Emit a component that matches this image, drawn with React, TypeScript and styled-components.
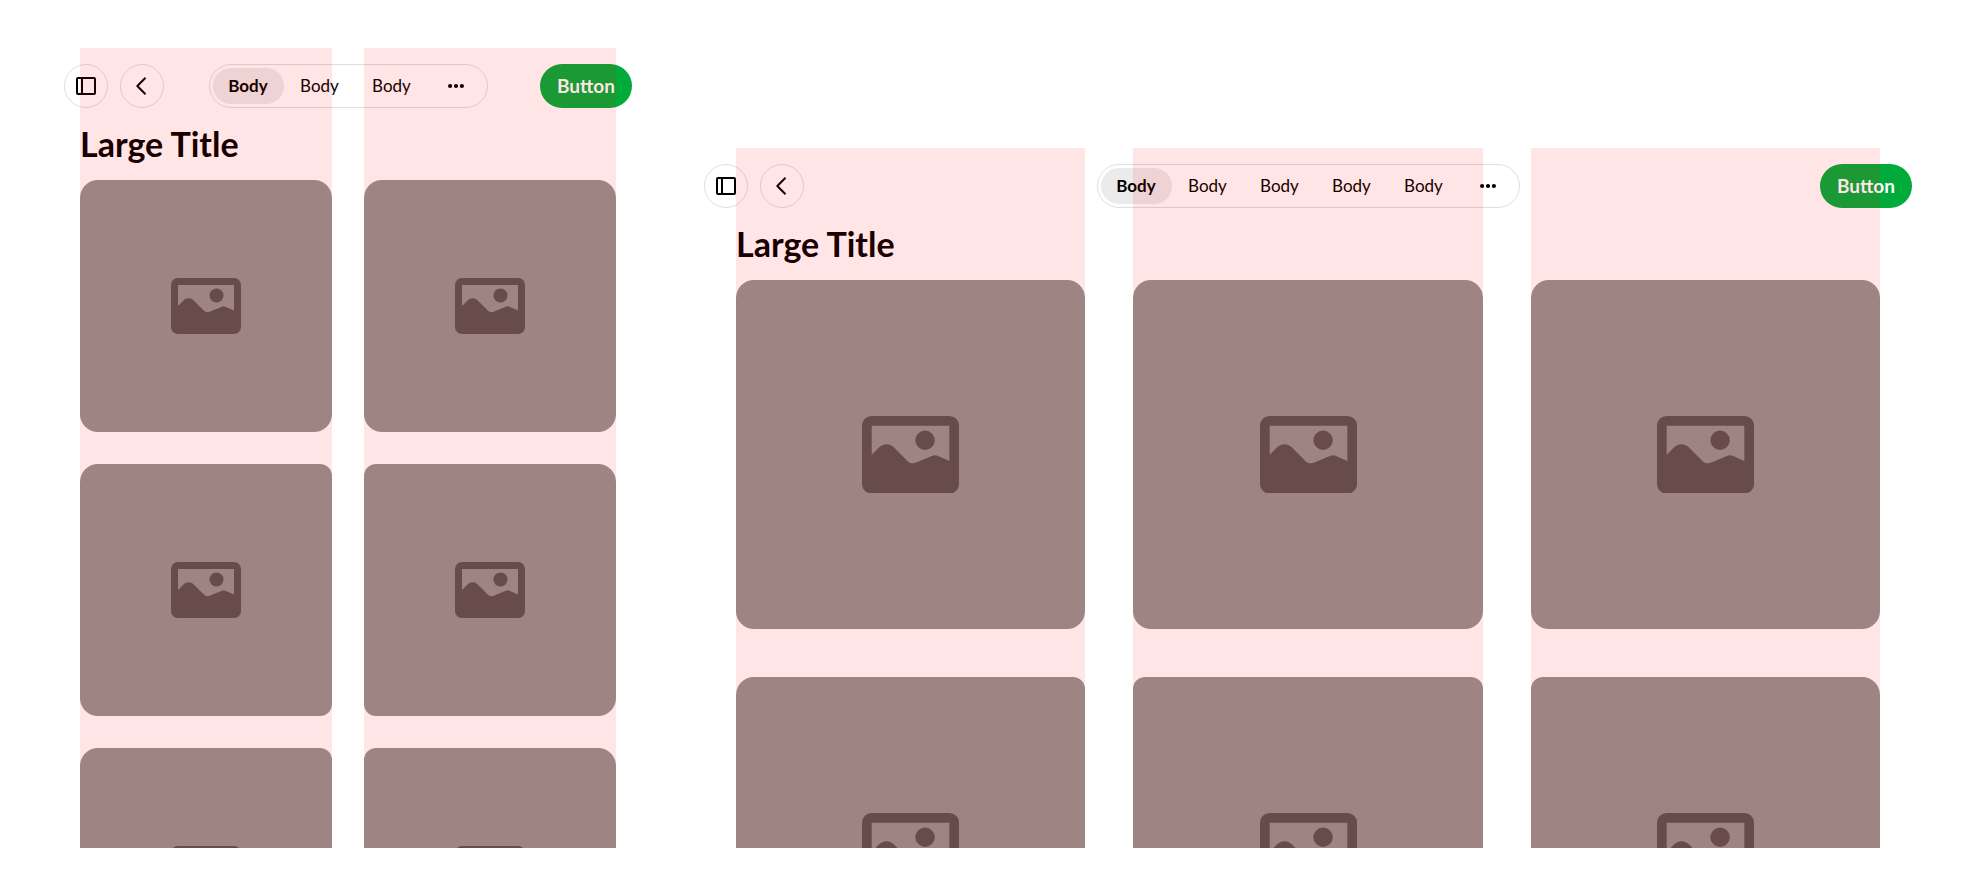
import React from 'react';
import styled, { createGlobalStyle } from 'styled-components';

const GlobalStyle = createGlobalStyle`
  *, *::before, *::after { box-sizing: border-box; }
  body {
    margin: 0;
    background: #fff;
    color: #000;
    font-family: Lato, "Liberation Sans", sans-serif;
  }
`;

const Page = styled.main`
  display: grid;
  grid-template-columns: 15fr 31fr;
  align-items: end;
  gap: 40px;
  padding: 48px;
`;

const Screen = styled.section<{ $ratio: string }>`
  position: relative;
  aspect-ratio: ${({ $ratio }) => $ratio};
  min-width: 0;
  overflow: hidden;
`;

const Toolbar = styled.header`
  display: grid;
  grid-template-columns: 1fr auto 1fr;
  align-items: center;
  padding: 16px;
`;

const Leading = styled.div`
  display: flex;
  gap: 12px;
`;

const RoundButton = styled.button`
  display: grid;
  place-items: center;
  width: 44px;
  height: 44px;
  padding: 0;
  border: 1px solid rgba(0, 0, 0, 0.13);
  border-radius: 50%;
  background: none;
  color: inherit;
`;

const Segments = styled.nav`
  display: flex;
  height: 44px;
  padding: 3px;
  border: 1px solid rgba(0, 0, 0, 0.13);
  border-radius: 22px;
`;

const Segment = styled.button<{ $selected?: boolean }>`
  width: ${({ $selected }) => ($selected ? 71 : 72)}px;
  padding: 0;
  border: 0;
  border-radius: 18px;
  background: ${({ $selected }) => ($selected ? 'rgba(0, 0, 0, 0.08)' : 'none')};
  color: inherit;
  font: inherit;
  font-size: 17px;
  line-height: 24px;
  font-weight: ${({ $selected }) => ($selected ? 700 : 400)};
`;

const MoreButton = styled.button`
  display: grid;
  place-items: center;
  width: 56px;
  padding: 0;
  border: 0;
  border-radius: 18px;
  background: none;
  color: inherit;
`;

const PrimaryButton = styled.button`
  justify-self: end;
  min-width: 92px;
  height: 44px;
  padding: 0 16px;
  border: 0;
  border-radius: 22px;
  background: #00ab3c;
  color: #fff;
  font: inherit;
  font-size: 19px;
  line-height: 24px;
  font-weight: 700;
`;

const Title = styled.h1<{ $inset: number }>`
  margin: 0;
  padding: 0 ${({ $inset }) => $inset}px 16px;
  font-size: 34px;
  line-height: 40px;
  font-weight: 700;
`;

const Gallery = styled.div<{ $columns: number; $inset: number }>`
  display: grid;
  grid-template-columns: repeat(${({ $columns }) => $columns}, 1fr);
  gap: ${({ $inset }) => $inset}px;
  padding: 0 ${({ $inset }) => $inset}px;
`;

const Tile = styled.div<{ $radius: string }>`
  display: grid;
  place-items: center;
  aspect-ratio: 1;
  border-radius: ${({ $radius }) => $radius};
  background: #959393;
  color: #575555;
`;

const Picture = styled.svg`
  display: block;
  width: calc(100% * 5 / 18);
`;

const GuideLayer = styled(Gallery)`
  position: absolute;
  inset: 0;
  pointer-events: none;
`;

const Guide = styled.div`
  background: rgba(255, 0, 0, 0.1);
`;

const SidebarIcon = () => (
  <svg width="20" height="18" viewBox="0 0 20 18" fill="none" stroke="currentColor" strokeWidth="2" aria-hidden="true">
    <rect x="1" y="1" width="18" height="16" rx="1" />
    <path d="M6 1v16" />
  </svg>
);

const BackIcon = () => (
  <svg width="20" height="20" viewBox="0 0 20 20" fill="none" stroke="currentColor" strokeWidth="2" aria-hidden="true">
    <path d="M13.5 1.7 5.3 10l8.2 8.3" strokeLinejoin="round" />
  </svg>
);

const MoreIcon = () => (
  <svg width="16" height="6" viewBox="0 0 16 6" fill="currentColor" aria-hidden="true">
    <circle cx="2.1" cy="3" r="2.1" />
    <circle cx="8" cy="3" r="2.1" />
    <circle cx="13.9" cy="3" r="2.1" />
  </svg>
);

const PictureIcon = () => (
  <Picture viewBox="0 0 20 16" fill="currentColor" aria-hidden="true">
    <path
      fillRule="evenodd"
      d="M2 0H18A2 2 0 0 1 20 2V14A2 2 0 0 1 18 16H2A2 2 0 0 1 0 14V2A2 2 0 0 1 2 0ZM2 2V8L3.6 6.4C4.4 5.6 5.7 5.6 6.5 6.4L9.3 9.2C9.8 9.75 10.5 9.9 11.2 9.6L14.4 8.25C14.8 8.05 15.3 8.05 15.7 8.25L18 9.25V2Z"
    />
    <circle cx="13" cy="5" r="2" />
  </Picture>
);

const OUTER = 18;
const INNER = 12;

// The top row is fully rounded; later rows keep the large radius on the outer edges only.
function tileRadius(index: number, columns: number) {
  const column = index % columns;
  const left = index < columns || column === 0 ? OUTER : INNER;
  const right = index < columns || column === columns - 1 ? OUTER : INNER;
  return `${left}px ${right}px ${right}px ${left}px`;
}

type DeviceProps = {
  name: string;
  ratio: string;
  columns: number;
  rows: number;
  inset: number;
  segments: number;
};

function Device({ name, ratio, columns, rows, inset, segments }: DeviceProps) {
  return (
    <Screen $ratio={ratio} aria-label={name}>
      <Toolbar>
        <Leading>
          <RoundButton type="button" aria-label="Sidebar">
            <SidebarIcon />
          </RoundButton>
          <RoundButton type="button" aria-label="Back">
            <BackIcon />
          </RoundButton>
        </Leading>
        <Segments aria-label="Sections">
          {Array.from({ length: segments }, (_, i) => (
            <Segment key={i} type="button" $selected={i === 0} aria-pressed={i === 0}>
              Body
            </Segment>
          ))}
          <MoreButton type="button" aria-label="More">
            <MoreIcon />
          </MoreButton>
        </Segments>
        <PrimaryButton type="button">Button</PrimaryButton>
      </Toolbar>
      <Title $inset={inset}>Large Title</Title>
      <Gallery $columns={columns} $inset={inset}>
        {Array.from({ length: columns * rows }, (_, i) => (
          <Tile key={i} $radius={tileRadius(i, columns)}>
            <PictureIcon />
          </Tile>
        ))}
      </Gallery>
      <GuideLayer $columns={columns} $inset={inset} aria-hidden="true">
        {Array.from({ length: columns }, (_, i) => (
          <Guide key={i} />
        ))}
      </GuideLayer>
    </Screen>
  );
}

export default function App() {
  return (
    <>
      <GlobalStyle />
      <Page>
        <Device name="Portrait" ratio="3 / 4" columns={2} rows={3} inset={32} segments={3} />
        <Device name="Landscape" ratio="62 / 35" columns={3} rows={2} inset={48} segments={5} />
      </Page>
    </>
  );
}
